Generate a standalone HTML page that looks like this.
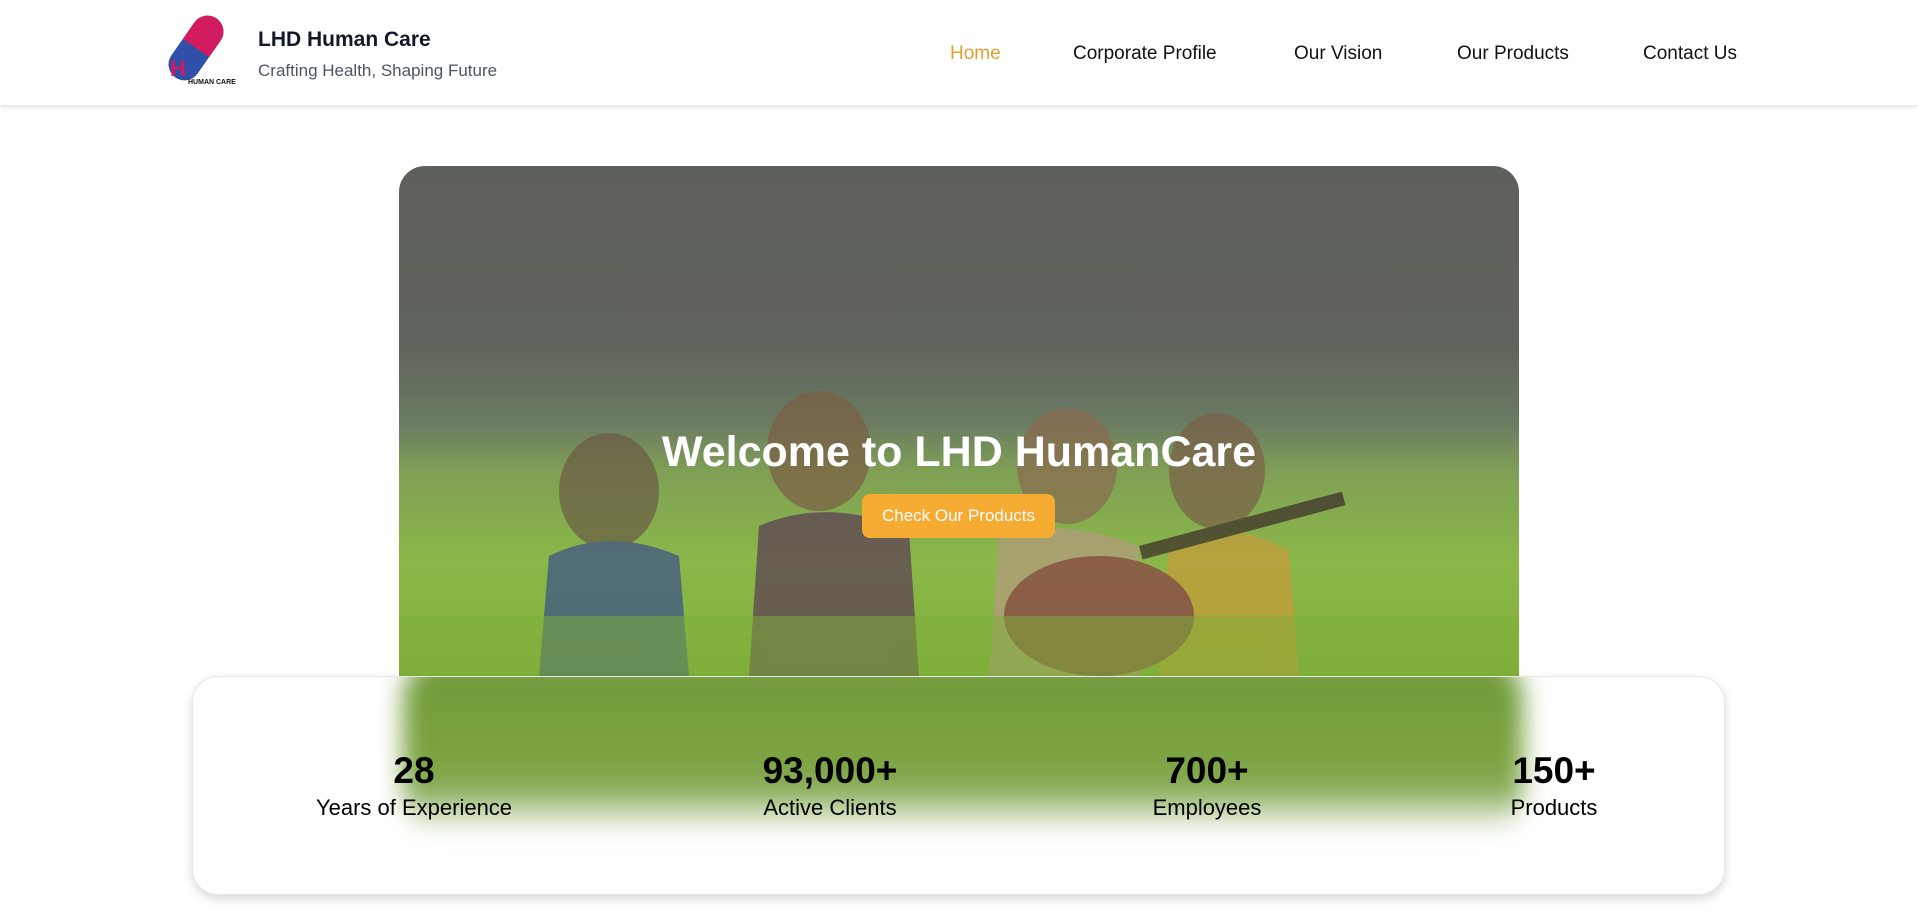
<!DOCTYPE html>
<html><head><meta charset="utf-8"><style>
*{margin:0;padding:0;box-sizing:border-box}
body{width:1918px;height:912px;overflow:hidden;background:#fff;font-family:"Liberation Sans",sans-serif;position:relative}
.hdr{position:absolute;left:0;top:0;width:1918px;height:105px;background:#fff;box-shadow:0 2px 4px rgba(0,0,0,.12)}
.t1{position:absolute;left:258px;top:28px;font-size:21px;font-weight:600;color:#111827}
.t2{position:absolute;left:258px;top:61px;font-size:17px;color:#4b5563}
.nav a{position:absolute;top:43px;font-size:19px;color:#111;text-decoration:none}
.hero{position:absolute;left:399px;top:166px;width:1120px;height:510px;border-radius:26px 26px 0 0;overflow:hidden;
background:linear-gradient(180deg,#5e615b 0%,#5f645c 35%,#6a7a62 50%,#80a055 60%,#8ab848 78%,#80b03c 100%)}
.h1{position:absolute;left:0;width:1120px;top:262px;text-align:center;color:#fff;font-size:43px;font-weight:700}
.btn{position:absolute;left:463px;top:328px;width:193px;height:44px;border-radius:8px;background:#f6ab33;color:#fff;font-size:17px;text-align:center;line-height:44px}
.card{position:absolute;left:192px;top:676px;width:1533px;height:219px;border-radius:26px;background:#fff;box-shadow:0 4px 10px rgba(0,0,0,.15);border:1px solid #e8e8e8;overflow:hidden}
.glow{position:absolute;left:210px;top:-20px;width:1120px;height:175px;background:linear-gradient(180deg,#6f9a3c 0%,#7aa23e 55%,#86aa55 75%,rgba(200,215,170,0) 100%);filter:blur(12px);border-radius:40px}
.st{position:absolute;top:72px;width:300px;margin-left:-150px;text-align:center;color:#000}
.st b{display:block;font-size:37px;font-weight:700;line-height:44px}
.st span{display:block;font-size:22px;line-height:30px}
</style></head><body>
<div class="hdr">
<svg style="position:absolute;left:160px;top:14px" width="80" height="74" viewBox="0 0 80 74">
<g transform="rotate(35 36 34)"><rect x="20" y="-2" width="32" height="72" rx="16" fill="#2f4fa8"/><path d="M20 34V14a16 16 0 0 1 32 0v20z" fill="#d21a5e"/></g>
<text x="10" y="62" font-size="22" font-weight="700" fill="#d21a5e" font-family="Liberation Sans">H</text>
<text x="28" y="70" font-size="7" font-weight="700" fill="#111" font-family="Liberation Sans">HUMAN CARE</text></svg>
<div class="t1">LHD Human Care</div>
<div class="t2">Crafting Health, Shaping Future</div>
<div class="nav"><a style="left:950px;color:#e0a030">Home</a><a style="left:1073px">Corporate Profile</a><a style="left:1294px">Our Vision</a><a style="left:1457px">Our Products</a><a style="left:1643px">Contact Us</a></div>
</div>
<div class="hero">
<svg width="1120" height="510" style="position:absolute;left:0;top:0">
<g opacity="0.7">
<ellipse cx="210" cy="325" rx="50" ry="58" fill="#6a5a45"/>
<path d="M150 390q60-30 130 0l10 120h-150z" fill="#3a4f8a"/>
<ellipse cx="420" cy="285" rx="52" ry="60" fill="#7a5e45"/>
<path d="M360 360q70-30 150 5l10 145h-170z" fill="#5a3a55"/>
<ellipse cx="668" cy="300" rx="50" ry="58" fill="#8a6a50"/>
<path d="M600 370q60-20 140 10v130h-150z" fill="#b59a80"/>
<ellipse cx="818" cy="305" rx="48" ry="58" fill="#7a5f48"/>
<path d="M770 375q60-25 120 10l10 125h-140z" fill="#c99a3a"/>
<ellipse cx="700" cy="450" rx="95" ry="60" fill="#8a3a45"/>
<rect x="740" y="380" width="210" height="14" transform="rotate(-15 740 380)" fill="#3a2a28"/>
</g>
<rect x="0" y="450" width="1120" height="60" fill="#80b03a" opacity="0.5"/>
</svg>
<div class="h1">Welcome to LHD HumanCare</div>
<div class="btn">Check Our Products</div>
</div>
<div class="card"><div class="glow"></div>
<div class="st" style="left:221px"><b>28</b><span>Years of Experience</span></div>
<div class="st" style="left:637px"><b>93,000+</b><span>Active Clients</span></div>
<div class="st" style="left:1014px"><b>700+</b><span>Employees</span></div>
<div class="st" style="left:1361px"><b>150+</b><span>Products</span></div>
</div>
</body></html>
